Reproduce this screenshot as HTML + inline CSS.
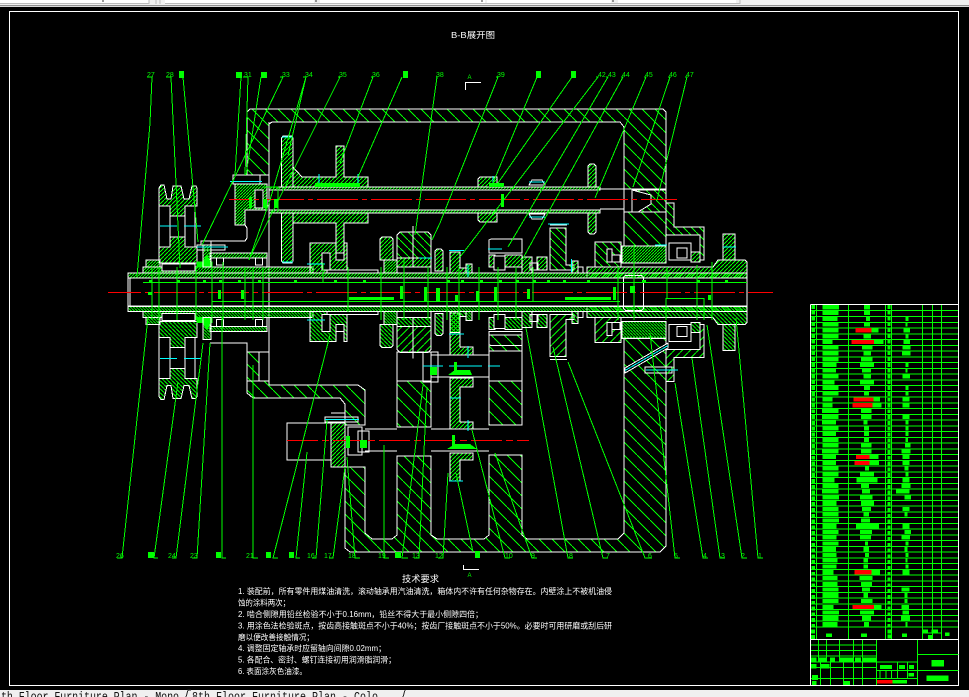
<!DOCTYPE html>
<html><head><meta charset="utf-8"><title>B-B</title>
<style>html,body{margin:0;padding:0;background:#000;width:969px;height:697px;overflow:hidden}svg{display:block}
text{font-family:"Liberation Sans","WenQuanYi Zen Hei","Noto Sans CJK SC",sans-serif}</style></head><body>
<svg width="969" height="697" viewBox="0 0 969 697" xmlns="http://www.w3.org/2000/svg" shape-rendering="crispEdges">
<defs>
<pattern id="d" width="3" height="3" patternUnits="userSpaceOnUse"><path d="M-1 4L4 -1" stroke="#0f0" stroke-width="1.300"/></pattern>
<pattern id="m" width="4" height="4" patternUnits="userSpaceOnUse"><path d="M-1 5L5 -1" stroke="#0f0" stroke-width="1.100"/></pattern>
<pattern id="w" width="13" height="13" patternUnits="userSpaceOnUse"><path d="M-1 -1L14 14" stroke="#0f0" stroke-width="1"/></pattern>
<pattern id="v" width="8" height="8" patternUnits="userSpaceOnUse"><path d="M-1 -1L9 9" stroke="#0f0" stroke-width="1"/></pattern>
<g id="half" stroke="#fff" stroke-width="1">
<!-- pulley -->
<path fill="url(#m)" d="M159 188L161 185H164L167 199H171L173 186H181L184 199H189L192 186H196L197 188V206H185V216H170V206H159Z"/>
<path fill="#000" d="M159 206H170V247H159ZM185 206H195V247H185ZM170 216H185V237H170Z"/>
<path fill="url(#m)" d="M170 237H185V247H197V263H159V247H170Z"/>
<path stroke="#0ff" d="M160 226H177M184 226H201"/>
<!-- sleeve & left -->
<path fill="url(#d)" d="M146 260H160V267H146Z"/>
<path fill="url(#d)" d="M143 267H313V273H143Z"/>
<path fill="#000" d="M162 264H195V271H162Z"/>
<!-- bearing box -->
<path fill="url(#d)" d="M210 253H267V258H210Z"/>
<path fill="none" d="M210 258V267M267 258V267M210 258H267"/>
<path fill="#000" d="M216.500 258H223.500V265H216.500ZM255.500 258H262.500V265H255.500Z"/>
<path fill="#0f0" stroke="#0f0" d="M197 266V262H203L207 255L210 262H212V267H197Z"/>
<path fill="url(#d)" d="M203 245H211V267H203Z"/>
<!-- gear 310 -->
<path fill="url(#m)" d="M310 243H336V260H344V243H347V270H327V273H310Z"/>
<path fill="#000" d="M322 253H330V270H322Z"/>
<path fill="#000" d="M336 253H344V260H336Z"/>
<path fill="none" d="M327 270H378V273"/>
<!-- gear 380 -->
<path fill="url(#m)" d="M380 239L382 237H391L393 239V260H380Z"/>
<path fill="url(#d)" d="M384 260H397V273H384Z"/>
<!-- gear 397-431 -->
<path fill="url(#v)" d="M397 235L400 232H428L431 235V258H397Z"/>
<path fill="url(#m)" d="M397 258H431V267H397Z"/>
<path fill="none" d="M413 226V267M431 258V273"/>
<path fill="url(#m)" d="M435 251L437 249H441L443 251V271H435Z"/>
<!-- gear 450 -->
<path fill="url(#m)" d="M450 252H460V268H466V273H450Z"/>
<path fill="url(#d)" d="M466 264H472V273H466Z"/>
<!-- 489-522 with bearing -->
<path fill="none" d="M489 240L491 239H522V253H489Z"/>
<path fill="url(#m)" d="M489 255H495V267H489ZM505 255H522V267H505Z"/>
<path fill="#000" d="M494 256H505V270H494Z"/>
<path fill="url(#m)" d="M522 257H532V273H522ZM537 257H547V270H537Z"/>
<path fill="none" d="M530 263H538V270H530Z"/>
<!-- 550 gear -->
<path fill="url(#v)" d="M550 228H566V265H574V270H550Z"/>
<path fill="url(#m)" d="M572 261H578V273H572Z"/>
<path fill="none" d="M550 225H567M550 228H566M578 267H583V273"/>
<!-- bearing cover 595 -->
<path fill="url(#v)" d="M595 242H621V267H595Z"/>
<path fill="#000" d="M607 249H612V262H607Z"/>
<path fill="#000" d="M612 255H620V262H612Z"/>
<!-- dense right -->
<path fill="url(#d)" d="M622 246H666V263H622Z"/>
<path fill="url(#m)" d="M587 278V267H713L718 260H745L747 262V278Z"/>
<path fill="none" d="M669 243H691V260H669ZM677 248H687V258H677Z"/>
<path fill="url(#m)" d="M691 252H700V262H691Z"/>
<path fill="url(#m)" d="M723 234H735V260H723Z"/>
<!-- right cap -->
<path fill="url(#v)" d="M666 203H674V227H704V260H700V235H666Z"/>
<!-- shaft strip -->
<path fill="url(#d)" d="M128 273H747V278H128Z"/>
<path fill="none" d="M128 292V273M130 278V292"/>
</g>
</defs>
<rect width="969" height="697" fill="#000"/>

<!-- top chrome -->
<rect width="969" height="7" fill="#f0f0f0"/>
<rect x="0" y="0" width="149" height="3" fill="#fff"/>
<rect x="165" y="0" width="149" height="3" fill="#fff"/>
<rect x="320" y="0" width="165" height="3" fill="#fff"/>
<rect x="487" y="0" width="124" height="3" fill="#fff"/>
<rect x="618" y="0" width="118" height="3" fill="#fff"/>
<path d="M0 3.500H149M165 3.500H740M149 0V4M156 0V4M160 0V4M740 0V4" stroke="#bbb" fill="none"/>
<path d="M0 5.500H969" stroke="#8f8f8f"/>
<path d="M0 6.500H969" stroke="#d8d8d8"/>
<path d="M103 0V2M316 0V2M482 0V2M613 0V2" stroke="#333"/>

<!-- frame -->
<rect x="9.500" y="11.500" width="949" height="674" fill="none" stroke="#fff"/>

<!-- title -->
<text x="451" y="38" font-size="8.500" fill="#fff" textLength="44" lengthAdjust="spacingAndGlyphs" shape-rendering="auto">B-B展开图</text>

<!-- section marks -->
<text x="467.500" y="79" font-size="6" fill="#0f0" shape-rendering="auto">A</text>
<path d="M465.500 90V82.500H481" stroke="#fff" fill="none"/>
<path d="M463.500 565V569.500H479" stroke="#fff" fill="none"/>
<text x="467.500" y="577" font-size="6" fill="#0f0" shape-rendering="auto">A</text>

<!-- housing -->
<g stroke="#fff" stroke-width="1">
<path fill="url(#w)" d="M247 112L250 109H663L666 112V189H624V127L620 122H272L269 124V175H247Z"/>
<path fill="url(#w)" d="M624 212H666V246H624Z"/>
<path fill="url(#v)" d="M632 190H666V212H638L651 204V195Z"/>
<path fill="none" d="M600 189H632M600 209H624M624 189V212M632 189V212"/>
<path fill="url(#w)" d="M345 467V548L350 552H660L666 546V338H624V533L618 539H527L522 535V455H489V535L484 539H437L431 535V456H397V535L392 539H372L365 533V467Z"/>
<path fill="url(#w)" d="M247 381H269V385H358L365 390V425H345V404L340 398H253L247 393Z"/>
<path fill="url(#w)" d="M247 352H259V381H247Z"/>
<path fill="none" d="M259 352H269V381H259ZM269 122V385M210 343H247V381"/>
<path fill="url(#w)" d="M397 381H431V427H397Z"/>
<path fill="url(#w)" d="M489 381H522V425H489Z"/>
<path fill="none" d="M397 352H431V381H397ZM489 351H522V381H489Z"/>
<path fill="url(#w)" d="M489 335H522V351H489Z"/>
<path fill="none" d="M365 429H397M431 429H489M365 451H397M431 451H489"/>
<path fill="none" d="M431 355H489M431 377H489M431 355V377M489 355V377"/>
<path fill="none" d="M287 423H331V460H287Z"/>
<path fill="url(#m)" d="M331 423H345V467H331Z"/>
<path fill="none" d="M331 413H345V423M325 417H358V422H325Z"/>
<path fill="none" d="M348 427H362V455H348ZM358 431H369V452H358Z"/>
<!-- bolt upper -->
<path fill="none" d="M233 175H260V184H233Z"/>
<path fill="url(#d)" d="M235 184H267V210H245V225H235Z"/>
<path fill="#000" d="M255 190H263V208H255Z"/>
<path fill="none" d="M245 225L247 228V238L245 241H210"/>
<path fill="none" d="M197 245H225V250H197ZM201 241H211V245H201Z"/>
<!-- upper shaft -->
<path fill="url(#d)" d="M269 187H600V190H269Z"/>
<path fill="url(#d)" d="M269 210H600V213H269Z"/>
<path fill="url(#m)" d="M281.500 138L283 136H292L293 138V187H281.500Z"/>
<path fill="url(#m)" d="M293 167L302 177H336V146H344V177H368V187H293Z"/>
<path fill="url(#m)" d="M281.500 213H293V261L292 263H283L281.500 261Z"/>
<path fill="url(#m)" d="M293 213H368V223H344V260H336V223H293Z"/>
<path fill="url(#m)" d="M478 179L480 177H497V187H478Z"/>
<path fill="url(#m)" d="M478 213H497V222H480L478 220Z"/>
<path fill="none" d="M529 185L532 180H542L545 185ZM529 214H545L542 219H532Z"/>
<path fill="url(#m)" d="M588 166L590 164H594L596 166V187H588Z"/>
<path fill="url(#m)" d="M588 213H596V232L594 234H590L588 232Z"/>
<!-- lower-shaft gears -->
<path fill="url(#m)" d="M450 378H473V387H460V422H473V429H450Z"/>
<path fill="url(#m)" d="M450 453H473V460H460V481H450Z"/>
<path fill="url(#m)" d="M450 313H460V347H473V355H450Z"/>
<path fill="none" d="M423 352H438V382H423Z"/>
<!-- oil tube -->
<path fill="#000" d="M625 368L668 343V348L625 373Z"/>
<path fill="none" d="M645 367H672V373H645Z"/>
</g>

<!-- main shaft group and mirror -->
<use href="#half"/>
<use href="#half" transform="matrix(1 0 0 -1 0 584.600)"/>
<path d="M128 278H747V306H128ZM128 273V312M747 262V323" fill="none" stroke="#fff"/>
<rect x="623.500" y="275.500" width="20" height="35" rx="3" fill="none" stroke="#fff"/>

<!-- cyan details -->
<g stroke="#0ff" fill="none">
<path d="M230 181.500H262M197 247H228M282 137H293M282 262H293M307 264H325M419 258H432M449 250.500H464M488 249H502M548 224H569M655 245H667M723 247H736M493 176V187M319 174V187M358 174V187M468 265V277M571.500 259V272M529 182H545M529 217H545"/>
<path d="M423 366H443M449 366H482M488 366H500M325 419.500H359M449 334H464M450 398H461M449 481H463M468 346V358M468 420V431M625 370.500L668 345.500M646 370H678M307 320H325"/>
</g>

<!-- red centerlines -->
<g stroke="#f00" fill="none">
<path d="M108 292.500H773" stroke-dasharray="41 4 5 4" stroke-dashoffset="8"/>
<path d="M229 199.500H677" stroke-dasharray="41 4 5 4" stroke-dashoffset="20"/>
<path d="M287 440.500H529" stroke-dasharray="31 4 7 4"/>
</g>

<!-- green internals on shaft -->
<g fill="#0f0">
<path d="M218 290h3v9h-3zM241 290h3v9h-3zM400 286h3v13h-3zM424 287h3v14h-3zM436 288h4v13h-4zM455 295h3v7h-3zM476 291h3v11h-3zM494 287h3v15h-3zM527 289h3v10h-3zM613 287h3v13h-3zM630 286h5v7h-5zM708 295h3v5h-3zM565 297h46v3h-46zM349 297h45v3h-45zM148 292h4v3h-4z"/>
<path d="M149 280h3v3h-3zM177 280h3v3h-3zM203 280h3v3h-3zM219 280h3v3h-3zM238 280h3v3h-3zM258 280h3v3h-3zM294 280h3v3h-3zM334 280h3v3h-3zM363 280h3v3h-3zM447 280h3v3h-3zM461 280h3v3h-3zM480 280h3v3h-3zM499 280h3v3h-3zM516 280h3v3h-3zM533 280h3v3h-3zM547 280h3v3h-3zM563 280h3v3h-3zM587 280h3v3h-3zM642 280h4v3h-4zM697 280h3v3h-3zM725 280h3v3h-3z"/>
<path d="M249 197h3v11h-3zM263 199h4v9h-4zM274 199h4v9h-4zM501 194h3v13h-3zM430 367h7v8h-7zM360 440h7v8h-7zM346 436h4v12h-4zM454 362h3v13h-3zM452 435h3v12h-3z"/>
<path d="M448 375L455 370H470L472 375ZM447 449L455 444H470L477 449Z"/>
<path d="M489 183H504V187H489ZM315 183H360V187H315Z"/>
</g>
<g stroke="#0f0" fill="none">
<path d="M143 282.500H747M212 301.500H620M666 298.500H704M263 187H278V212"/>
<path d="M666 298V320M704 298V320M152 267V320M159 267V320M177 267V320M196 267V320M212 268V320M223 262V320M245 267V320M253 267V320M263 267V320M323 263V282M348 267V312M381 267V320M404 258V320M428 267V320M447 267V320M459 267V320M479 267V320M498 267V320M516 267V320M533 267V302M618 267V320M634 245V320M667 267V298M697 265V320M712 262V320"/>
</g>

<!-- leaders -->
<g stroke="#0f0" fill="none" stroke-width="1">
<path d="M147 77H152L150 123L137 277M166 77H171L180 268M183 77L198 242M241 77L235 175M243 77H248L245 175M261 77L246 175M280 77H283L202 245M303 77H306L288 155M306 77L270 200L249 260M338 77H340L250 257M371 77H373L340 163M402 77L358 177M436 77H437L415 235M496 77H498L440 223L432 240M537 77L493 183M572 77L498 183M596 77H598L460 257M606 77H608L508 247M621 77H623L522 260M644 77H646L595 198M668 77H670L633 187M685 77H687L657 200"/>
<path d="M117 558H122L148 317M158 558H154L178 382M172 558H176L203 343M192 558H197L210 343M226 558H222V317M253 365V558H258M278 558H273L330 335M300 558H296L307 452M312 558H316L327 420M329 558H333L345 467M360 558H355L347 457M384 445V558H389M408 558H402L423 385M414 558H419L427 387M438 558H443L448 473M473 552L456 473M510 558H505L472 430M537 558H532L495 453M573 558H568L526 328M608 558H603L553 347M652 558H645L568 362M680 558H675L650 333M708 558H703L675 383M725 558H720L692 358M747 558H742L707 325M763 558H758L736 318"/>
</g>

<!-- top labels -->
<g font-size="7" fill="#0f0" shape-rendering="auto">
<text x="147" y="77">27</text><text x="166" y="77">28</text><text x="244" y="77">31</text><text x="282" y="77">33</text><text x="305" y="77">34</text><text x="339" y="77">35</text><text x="372" y="77">36</text><text x="436" y="77">38</text><text x="497" y="77">39</text><text x="598" y="77">42</text><text x="608" y="77">43</text><text x="622" y="77">44</text><text x="645" y="77">45</text><text x="669" y="77">46</text><text x="686" y="77">47</text>
<text x="116" y="558">26</text><text x="168" y="558">24</text><text x="190" y="558">23</text><text x="246" y="558">21</text><text x="307" y="558">16</text><text x="324" y="558">17</text><text x="348" y="558">18</text><text x="378" y="558">19</text><text x="412" y="558">13</text><text x="435" y="558">12</text><text x="505" y="558">10</text><text x="531" y="558">9</text><text x="569" y="558">8</text><text x="606" y="558">7</text><text x="648" y="558">6</text><text x="674" y="558">5</text><text x="703" y="558">4</text><text x="721" y="558">3</text><text x="741" y="558">2</text><text x="758" y="558">1</text>
</g>
<g fill="#0f0">
<rect x="179" y="71" width="5" height="7"/><rect x="236" y="72" width="6" height="6"/><rect x="261" y="72" width="6" height="6"/><rect x="403" y="71" width="5" height="7"/><rect x="536" y="71" width="5" height="7"/><rect x="571" y="71" width="5" height="7"/>
<rect x="148" y="552" width="6" height="6"/><rect x="216" y="552" width="5" height="6"/><rect x="266" y="552" width="5" height="6"/><rect x="289" y="552" width="5" height="6"/><rect x="395" y="552" width="6" height="6"/><rect x="475" y="551" width="5" height="7"/>
</g>

<!-- tech requirements -->
<g fill="#fff" font-size="8" shape-rendering="auto">
<text x="402" y="582" font-size="9" textLength="37" lengthAdjust="spacingAndGlyphs">技术要求</text>
<text x="238" y="594" textLength="374" lengthAdjust="spacingAndGlyphs">1. 装配前，所有零件用煤油清洗，滚动轴承用汽油清洗，箱体内不许有任何杂物存在。内壁涂上不被机油侵</text>
<text x="238" y="605.500" textLength="52" lengthAdjust="spacingAndGlyphs">蚀的涂料两次；</text>
<text x="238" y="617" textLength="245" lengthAdjust="spacingAndGlyphs">2. 啮合侧隙用铅丝检验不小于0.16mm，铅丝不得大于最小侧隙四倍；</text>
<text x="238" y="628.500" textLength="374" lengthAdjust="spacingAndGlyphs">3. 用涂色法检验斑点，按齿高接触斑点不小于40%；按齿厂接触斑点不小于50%。必要时可用研磨或刮后研</text>
<text x="238" y="640" textLength="76" lengthAdjust="spacingAndGlyphs">磨以便改善接触情况；</text>
<text x="238" y="651" textLength="148" lengthAdjust="spacingAndGlyphs">4. 调整固定轴承时应留轴向间隙0.02mm；</text>
<text x="238" y="662.500" textLength="158" lengthAdjust="spacingAndGlyphs">5. 各配合、密封、螺钉连接初用润滑脂润滑；</text>
<text x="238" y="674" textLength="69" lengthAdjust="spacingAndGlyphs">6. 表面涂灰色油漆。</text>
</g>

<!-- parts table -->
<g stroke="#0f0" fill="none">
<path d="M811 310.500H958M811 316.500H958M811 322.500H958M811 328H958M811 334H958M811 339.500H958M811 345.500H958M811 351H958M811 357H958M811 362.500H958M811 368.500H958M811 374H958M811 380H958M811 385.500H958M811 391.500H958M811 397H958M811 403H958M811 408.500H958M811 414.500H958M811 420H958M811 426H958M811 431.500H958M811 437.500H958M811 443H958M811 449H958M811 454.500H958M811 460.500H958M811 466H958M811 472H958M811 477.500H958M811 483.500H958M811 489H958M811 495H958M811 500.500H958M811 506H958M811 512H958M811 517.500H958M811 523.500H958M811 529H958M811 535H958M811 540.500H958M811 546.500H958M811 552H958M811 558H958M811 563.500H958M811 569.500H958M811 575H958M811 581H958M811 586.500H958M811 592.500H958M811 598H958M811 604H958M811 609.500H958M811 615.500H958M811 621H958M811 627H958"/>
<path d="M816.500 304V639M848.500 304V639M885.500 304V639M891.500 304V639M922.500 304V639M932.500 304V639M941.500 304V639M922 633H941"/>
</g>
<g fill="none" stroke="#0f0">
<path d="M813 305V627" stroke-width="3.500" stroke-dasharray="3.800 2"/>
<path d="M889 305V627" stroke-width="3" stroke-dasharray="3.800 2"/>
</g>
<g transform="translate(800 295) scale(.33333)" fill="none" stroke-width="12.500">
<path stroke="#0f0" d="M68 37H117M192 37H210M68 54.500H115M192 54.500H210M68 72H113M198 72H210M316 72H326M68 89H115M192 89H210M316 89H322M68 106H116M215 106H235M310 106H330M68 123.600H115M190 123.600H213M316 123.600H326M68 141H98M222 141H250M310 141H330M68 158H115M186 158H218M308 158H332M68 175.400H115M190 175.400H213M306 175.400H332M68 193H115M183 193H218M68 210H110M180 210H222M316 210H326M68 227H108M186 227H213M316 227H322M68 244.600H115M190 244.600H213M308 244.600H330M68 262H103M180 262H222M68 279H115M192 279H210M316 279H326M68 296H115M192 296H207M316 296H326M68 314H97M220 314H240M308 314H328M68 331H98M218 331H245M308 331H328M66 348H115M183 348H215M66 365.500H115M183 365.500H215M308 365.500H328M66 383H108M190 383H203M316 383H326M68 400H115M192 400H207M316 400H326M68 417.400H108M192 417.400H207M316 417.400H326M68 434.600H115M192 434.600H207M316 434.600H324M68 452H115M183 452H215M315 452H332M66 469H115M183 469H215M305 469H332M68 486.500H108M208 486.500H235M308 486.500H328M68 504H108M208 504H237M308 504H328M68 521H115M195 521H207M314 521H326M68 538H115M180 538H222M316 538H326M68 555.600H103M170 555.600H233M308 555.600H328M68 573H115M183 573H207M305 573H332M66 590H115M186 590H210M288 590H328M68 607.500H117M180 607.500H217M313 607.500H333M68 624.700H110M183 624.700H222M68 642H115M186 642H213M308 642H328M68 659H115M190 659H207M313 659H323M68 676.500H117M183 676.500H210M68 694H110M168 694H237M308 694H328M68 711H115M180 711H216M313 711H333M68 728H110M180 728H213M305 728H330M68 745.600H115M195 745.600H204M316 745.600H326M68 763H108M190 763H207M313 763H323M68 780H110M195 780H207M316 780H326M68 797H113M190 797H204M316 797H322M68 815H110M190 815H204M316 815H326M68 832H100M215 832H240M308 832H328M68 849H112M178 849H218M68 866.600H112M183 866.600H216M68 884H115M186 884H210M305 884H328M68 901H115M190 901H204M313 901H323M68 918.500H115M183 918.500H218M313 918.500H323M68 936H100M222 936H245M305 936H327M68 953H117M180 953H222M308 953H327M68 970H115M186 970H213M303 970H330M68 987.600H113M192 987.600H207M316 987.600H323"/>
<path stroke="#f00" d="M167 106H215M155 141H222M160 314H220M158 331H218M168 486.500H208M163 504H208M163 832H215M158 936H222"/>
</g>

<!-- table footer + title block (coords from crop) -->
<g transform="translate(800 490) scale(.33333)">
<g fill="#0f0">
<path d="M33 418h12v12H33zM33 435h12v12H33zM78 430h18v11H78zM183 430h18v11h-18zM262 418h13v12h-13zM262 433h13v12h-13zM306 430h15v11h-15zM368 418h16v12h-16zM394 418h20v12h-20zM384 435h15v12h-15zM435 427h14v11h-14z"/>
<path d="M30 503h20v13H30zM55 503h23v13H55zM90 503h15v13H90zM118 503h42v13h-42zM165 503h18v13h-18zM187 503h41v13h-41zM33 522h17v13H33zM62 522h26v13H62zM36 555h18v15H36zM36 573h14v12H36zM130 573h20v12h-20z"/>
<path d="M240 525h36v12h-36zM297 525h18v12h-18zM327 525h15v12h-15zM325 549h17v11h-17zM278 570h43v11h-43z"/>
<path d="M395 510h37v20h-37zM380 557h66v16h-66z"/>
</g>
<rect x="230" y="570" width="48" height="11" fill="#f00"/>
<g stroke="#0f0" stroke-width="3" fill="none">
<path d="M30 465H230M30 481H230M30 498H230M30 516H230M30 532H230M30 565H230M55 448V516M80 448V516M118 448V516M160 448V516M187 448V516M62 516V585M92 516V585M130 516V585M160 516V585M187 516V585"/>
<path d="M230 448V585M352 448V585M230 516H352M230 541H352M230 565H352M352 493H475M352 541H475M292 516V565M322 516V565M240 541V565M258 541V565M275 541V565"/>
</g>
</g>
<path d="M810.500 304.500H958.500M810.500 304.500V685M810 639.500H958" stroke="#fff" fill="none"/>

<!-- bottom tabs -->
<rect x="0" y="690" width="969" height="7" fill="#f0f0f0"/>
<g font-size="10" fill="#111" shape-rendering="auto" transform="translate(0 700.500) scale(1 1.300)">
<text x="1" y="0" style="font-family:'Liberation Mono',monospace" textLength="178">th Floor Furniture Plan - Mono</text>
<text x="192" y="0" style="font-family:'Liberation Mono',monospace" textLength="186">8th Floor Furniture Plan - Colo</text>
</g>
<path d="M186 697L188 690H191M403 697L405 690" stroke="#222" fill="none"/>
</svg>
</body></html>
